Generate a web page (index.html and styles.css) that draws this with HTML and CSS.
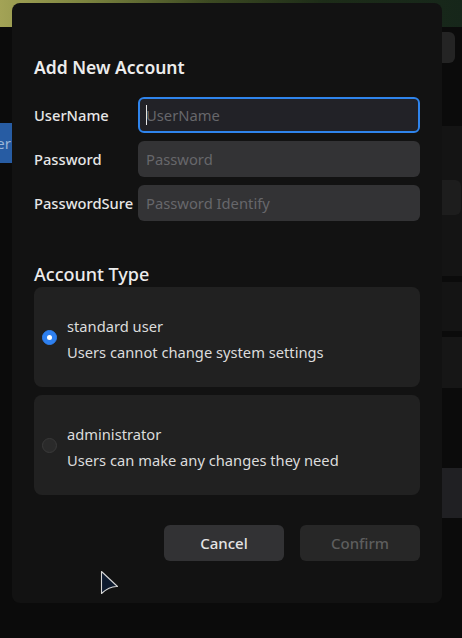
FILE: index.html
```html
<!DOCTYPE html>
<html lang="en">
<head>
<meta charset="utf-8">
<title>Add New Account</title>
<link rel="stylesheet" href="styles.css">
</head>
<body>
<div class="desktop">
  <div class="wallpaper"></div>
  <div class="app">
    <aside class="sidebar">
      <div class="nav-item active">User</div>
    </aside>
    <main class="main">
      <div class="toolbar"><div class="search"></div></div>
      <section class="panel panel-a"><div class="panel-box"></div></section>
      <section class="panel panel-b"></section>
      <section class="panel panel-c"></section>
      <section class="panel panel-d"></section>
    </main>
  </div>
</div>

<div class="dialog">
  <h1 class="title">Add New Account</h1>
  <div class="form">
    <div class="row">
      <label class="label">UserName</label>
      <div class="input focused"><span class="caret"></span><span class="ph">UserName</span></div>
    </div>
    <div class="row">
      <label class="label">Password</label>
      <div class="input"><span class="ph">Password</span></div>
    </div>
    <div class="row">
      <label class="label">PasswordSure</label>
      <div class="input"><span class="ph">Password Identify</span></div>
    </div>
  </div>

  <h2 class="section-title">Account Type</h2>
  <div class="options">
    <div class="option">
      <span class="radio checked"></span>
      <div class="option-text">
        <div class="option-name">standard user</div>
        <div class="option-desc">Users cannot change system settings</div>
      </div>
    </div>
    <div class="option">
      <span class="radio"></span>
      <div class="option-text">
        <div class="option-name">administrator</div>
        <div class="option-desc">Users can make any changes they need</div>
      </div>
    </div>
  </div>

  <div class="buttons">
    <button class="btn btn-cancel">Cancel</button>
    <button class="btn btn-confirm">Confirm</button>
  </div>
</div>

<svg class="pointer" width="22" height="26" viewBox="0 0 22 26">
  <path d="M1.5 1.5 L17.5 16.5 Q9.5 16 1.5 23.5 Z" fill="#0d1a2e" stroke="#d6d6d6" stroke-width="1.1" stroke-linejoin="round"/>
</svg>
</body>
</html>
```

FILE: styles.css
```css
* { box-sizing: border-box; }

html, body {
  margin: 0;
  padding: 0;
}

body {
  width: 462px;
  height: 638px;
  overflow: hidden;
  background: #0b0b0b;
  font-family: "Noto Sans", "Open Sans", sans-serif;
  position: relative;
}

/* ---------- background desktop ---------- */
.desktop {
  display: flex;
  flex-direction: column;
  height: 638px;
}

.wallpaper {
  height: 27px;
  flex: none;
  background: linear-gradient(to right, #a3a356 0%, #7d8540 18%, #3d4a22 45%, #1d2c18 70%, #16261a 100%);
}

.app {
  flex: 1;
  display: flex;
  background: #0b0b0b;
}

.sidebar {
  width: 12px;
  flex: none;
  overflow: hidden;
  padding-top: 96px;
}

.nav-item {
  height: 40px;
  display: flex;
  align-items: center;
  justify-content: flex-end;
  white-space: nowrap;
  font-size: 15px;
  color: #9cb6d8;
  padding-right: 1px;
}

.nav-item.active {
  background: #275ca3;
}

.main {
  flex: 1;
  display: flex;
  flex-direction: column;
  padding-top: 5px;
}

.toolbar {
  display: flex;
  justify-content: flex-end;
  padding-right: 7px;
  height: 31px;
}

.search {
  width: 200px;
  height: 31px;
  border-radius: 6px;
  background: #242424;
}

.panel {
  background: #141414;
}

.panel-a {
  margin-top: 63px;
  height: 150px;
  padding-top: 54px;
  display: flex;
  justify-content: flex-end;
  padding-right: 1px;
}

.panel-box {
  width: 200px;
  height: 35px;
  border-radius: 6px;
  background: #1d1d1d;
}

.panel-b {
  margin-top: 6px;
  height: 49px;
}

.panel-c {
  margin-top: 6px;
  height: 51px;
  background: #161616;
}

.panel-d {
  margin-top: 80px;
  height: 50px;
  background: #202023;
}

/* ---------- dialog ---------- */
.dialog {
  position: absolute;
  left: 12px;
  top: 3px;
  width: 430px;
  height: 600px;
  background: #121212;
  border-radius: 8px;
  padding: 52px 22px 0 22px;
  display: flex;
  flex-direction: column;
}

.title {
  margin: 0;
  font-size: 17.5px;
  line-height: 24px;
  font-weight: 600;
  color: #ececec;
}

.form {
  margin-top: 18px;
  display: flex;
  flex-direction: column;
  gap: 8px;
}

.row {
  display: flex;
  align-items: center;
}

.label {
  width: 104px;
  flex: none;
  font-size: 14.7px;
  font-weight: 500;
  color: #e6e6e6;
  white-space: nowrap;
  padding-bottom: 1px;
}

.input {
  flex: 1;
  height: 36px;
  border-radius: 6px;
  background: #333335;
  display: flex;
  align-items: center;
  padding-left: 8px;
  font-size: 14.75px;
}

.input.focused {
  background: #222227;
  border: 2px solid #2f84ec;
  padding-left: 6px;
}

.caret {
  width: 1px;
  height: 20px;
  background: #e8e8e8;
  margin-right: -1px;
}

.ph {
  color: #67676b;
}

.section-title {
  margin: 41px 0 0 0;
  font-size: 18px;
  line-height: 24px;
  font-weight: 500;
  color: #ececec;
}

.options {
  margin-top: 1px;
  display: flex;
  flex-direction: column;
  gap: 8px;
}

.option {
  height: 100px;
  border-radius: 8px;
  background: #212121;
  display: flex;
  align-items: center;
  padding-left: 8px;
  padding-top: 3px;
}

.radio {
  width: 15px;
  height: 15px;
  border-radius: 50%;
  flex: none;
  background: #2a2a2a;
  border: 1px solid #3a3a3a;
  margin-right: 10px;
  margin-top: -3px;
  display: flex;
  align-items: center;
  justify-content: center;
}

.radio.checked {
  background: #2e80f0;
  border-color: #2e80f0;
}

.radio.checked::after {
  content: "";
  width: 5px;
  height: 5px;
  border-radius: 50%;
  background: #ffffff;
}

.option-text {
  display: flex;
  flex-direction: column;
  gap: 6px;
  font-size: 14.7px;
  line-height: 20px;
  color: #dcdcdc;
}

.buttons {
  margin-top: 30px;
  display: flex;
  justify-content: flex-end;
  gap: 16px;
}

.btn {
  width: 120px;
  height: 36px;
  border: none;
  border-radius: 6px;
  font-family: "Noto Sans", "Open Sans", sans-serif;
  font-size: 15px;
  font-weight: 500;
  padding: 0;
}

.btn-cancel {
  background: #323234;
  color: #e4e4e4;
}

.btn-confirm {
  background: #272727;
  color: #5e5e5e;
}

/* mouse pointer overlay */
.pointer {
  position: absolute;
  left: 100px;
  top: 570px;
}
```
